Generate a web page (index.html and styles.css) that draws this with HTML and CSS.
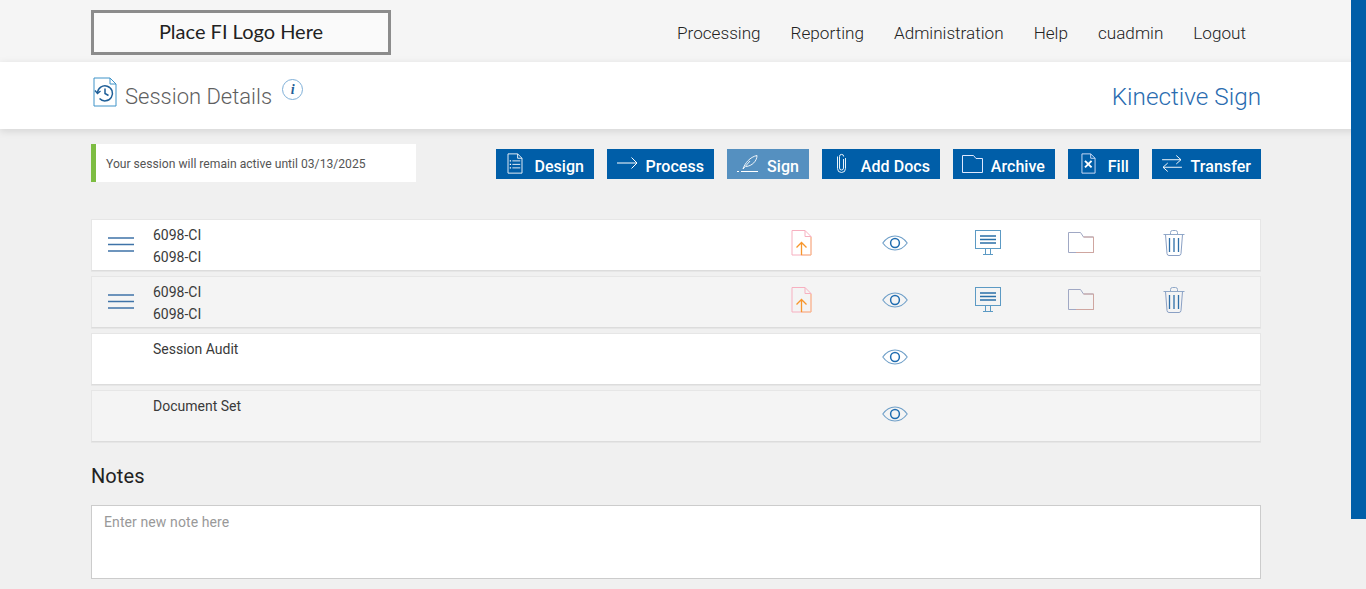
FILE: index.html
```html
<!DOCTYPE html>
<html lang="en">
<head>
<meta charset="utf-8">
<title>Session Details</title>
<link rel="stylesheet" href="styles.css">
</head>
<body>
<svg class="defs" width="0" height="0" aria-hidden="true">
  <defs>
    <symbol id="i-upload" viewBox="0 0 21 26">
      <path d="M1 .5h13l6 6v18.500H1z M14 .5v6h6" fill="none" stroke="#f7b0c0"/>
      <path d="M20 7v18H10" fill="none" stroke="#f9bc84"/>
      <path d="M10.500 25V12.500M5.500 17.500l5-5 5 5" fill="none" stroke="#f7962c" stroke-width="1.300"/>
    </symbol>
    <symbol id="i-eye" viewBox="0 0 26 16">
      <path d="M.8 8C4 3.500 8.500 1 13 1s9 2.500 12.200 7C22 12.500 17.500 15 13 15S4 12.500.8 8z" fill="none" stroke="#6f9fc8" stroke-width="1.100"/>
      <circle cx="13" cy="8" r="4.400" fill="none" stroke="#1f6cb0" stroke-width="1.500"/>
    </symbol>
    <symbol id="i-screen" viewBox="0 0 26 25">
      <rect x=".5" y=".5" width="25" height="18" fill="none" stroke="#5c9ac4"/>
      <path d="M5 6h16M5 9.500h16M5 13h16" stroke="#2a6fa8" stroke-width="1.300"/>
      <path d="M10.500 19v5M15.500 19v5M8 24.500h10" stroke="#5c9ac4" fill="none"/>
    </symbol>
    <symbol id="i-folder" viewBox="0 0 26 21">
      <path d="M.5 20.500V.5h12l3 4.500h10v15.500z" fill="none" stroke="#a0a8c4"/>
      <path d="M15.500 5h10v15.500H8" fill="none" stroke="#cfa6a0"/>
    </symbol>
    <symbol id="i-trash" viewBox="0 0 22 26">
      <path d="M.5 4.500h21M7.500 4.500V2.500q0-2 2-2h3q2 0 2 2v2" fill="none" stroke="#90a8c8"/>
      <path d="M2.500 4.500l1.500 19q.2 2 2 2h10q1.800 0 2-2l1.500-19" fill="none" stroke="#8aa0c4"/>
      <path d="M6.500 8v14M11 8v14M15.500 8v14" stroke="#2f6fa8" stroke-width="1.300"/>
    </symbol>
    <symbol id="i-menu" viewBox="0 0 26 16">
      <path d="M0 1h26M0 7.500h26M0 14h26" stroke="#3f73a8" stroke-width="1.400"/>
    </symbol>
  </defs>
</svg>

<header class="topbar">
  <div class="wrap topbar-inner">
    <div class="logo">Place FI Logo Here</div>
    <nav class="nav">
      <a>Processing</a><a>Reporting</a><a>Administration</a><a>Help</a><a>cuadmin</a><a>Logout</a>
    </nav>
  </div>
</header>

<section class="subhead">
  <div class="wrap subhead-inner">
    <div class="title-group">
      <svg class="title-icon" width="24" height="30" viewBox="0 0 24 30" aria-hidden="true">
        <path d="M1 1h16l6 6v22H1z M17 1v6h6" fill="none" stroke="#3f93c8" stroke-width="1"/>
        <path d="M4.500 16a7.500 7.500 0 1 1 2 5.500" fill="none" stroke="#1f5f98" stroke-width="1.500"/>
        <path d="M2 13.500l2.500 3 3-2.500" fill="none" stroke="#1f5f98" stroke-width="1.400"/>
        <path d="M12 11.500v5l3.500 2" fill="none" stroke="#1f5f98" stroke-width="1.500"/>
      </svg>
      <h1 class="title">Session Details</h1>
      <span class="info">i</span>
    </div>
    <div class="product">Kinective Sign</div>
  </div>
</section>

<main class="wrap">
  <div class="actions">
    <div class="session-note">Your session will remain active until 03/13/2025</div>
    <div class="buttons">
      <a class="btn btn-design">
        <svg width="16" height="21" viewBox="0 0 18 24" aria-hidden="true"><path d="M1 1h11l5 5v17H1z M12 1v5h5" fill="none" stroke="#fff"/><path d="M6 9h9M6 13h9M6 17h9" stroke="#fff"/><path d="M3 9h1.500M3 13h1.500M3 17h1.500" stroke="#fff" stroke-width="1.600"/></svg>
        Design</a>
      <a class="btn btn-process">
        <svg width="21" height="12" viewBox="0 0 21 12" aria-hidden="true"><path d="M0 6h20M14.500 .5L20 6l-5.500 5.500" fill="none" stroke="#fff"/></svg>
        Process</a>
      <a class="btn btn-sign btn-active">
        <svg width="21" height="17" viewBox="0 0 21 17" aria-hidden="true"><path d="M0 16.500h21" stroke="#fff" stroke-dasharray="2 2 17"/><path d="M6 14C8 8 13 2 20 .5 20 6 15 11 9 11.500M6 14l7-8" fill="none" stroke="#fff" stroke-width=".9"/></svg>
        Sign</a>
      <a class="btn btn-docs">
        <svg width="9" height="20" viewBox="0 0 9 20" aria-hidden="true"><path d="M6.500 6v9a2 2 0 0 1-4 0V3.500a2 2 0 0 1 4.200 0M8.500 5v10.500a4 4 0 0 1-8 0V3.500" fill="none" stroke="#e8f4fb"/></svg>
        Add Docs</a>
      <a class="btn btn-archive">
        <svg width="21" height="18" viewBox="0 0 21 18" aria-hidden="true"><path d="M.5 17.500V.5h11l2.500 3h6.500v14z" fill="none" stroke="#dfe8ff"/></svg>
        Archive</a>
      <a class="btn btn-fill">
        <svg width="17" height="21" viewBox="0 0 17 24" aria-hidden="true"><path d="M1 1h10l5 5v17H1z M11 1v5h5" fill="none" stroke="#dfe8ff"/><path d="M4.500 9l7.500 7.500M12 9l-7.500 7.500" stroke="#fff" stroke-width="2.200"/></svg>
        Fill</a>
      <a class="btn btn-transfer">
        <svg width="20" height="17" viewBox="0 0 21 18" aria-hidden="true"><path d="M0 5h20M15 .5L20 5l-5 4.500M21 13H1M6 8.500L1 13l5 4.500" fill="none" stroke="#fff"/></svg>
        Transfer</a>
    </div>
  </div>

  <div class="rows">
    <div class="row">
      <svg class="menu" width="26" height="16"><use href="#i-menu"/></svg>
      <div class="row-text"><div>6098-CI</div><div>6098-CI</div></div>
      <svg width="21" height="26"><use href="#i-upload"/></svg>
      <svg class="eye" width="26" height="16"><use href="#i-eye"/></svg>
      <svg width="26" height="25"><use href="#i-screen"/></svg>
      <svg class="folder" width="26" height="21"><use href="#i-folder"/></svg>
      <svg width="22" height="26"><use href="#i-trash"/></svg>
    </div>
    <div class="row row-alt">
      <svg class="menu" width="26" height="16"><use href="#i-menu"/></svg>
      <div class="row-text"><div>6098-CI</div><div>6098-CI</div></div>
      <svg width="21" height="26"><use href="#i-upload"/></svg>
      <svg class="eye" width="26" height="16"><use href="#i-eye"/></svg>
      <svg width="26" height="25"><use href="#i-screen"/></svg>
      <svg class="folder" width="26" height="21"><use href="#i-folder"/></svg>
      <svg width="22" height="26"><use href="#i-trash"/></svg>
    </div>
    <div class="row">
      <span></span>
      <div class="row-text"><div>Session Audit</div></div>
      <span></span>
      <svg class="eye" width="26" height="16"><use href="#i-eye"/></svg>
    </div>
    <div class="row row-alt">
      <span></span>
      <div class="row-text"><div>Document Set</div></div>
      <span></span>
      <svg class="eye" width="26" height="16"><use href="#i-eye"/></svg>
    </div>
  </div>

  <h2 class="notes-title">Notes</h2>
  <textarea class="notes" placeholder="Enter new note here"></textarea>
</main>

<div class="scrollbar"></div>
</body>
</html>
```

FILE: styles.css
```css
* { box-sizing: border-box; }
html, body { height: 100%; }
body {
  margin: 0;
  height: 589px;
  overflow: hidden;
  background: #f0f0f0;
  font-family: Roboto, "Liberation Sans", sans-serif;
  color: #333;
}
.defs { position: absolute; }
.wrap { width: 1170px; margin-left: 91px; }

.topbar { height: 62px; background: #f5f5f5; }
.topbar-inner { display: flex; justify-content: space-between; padding-top: 10px; }
.logo {
  width: 300px;
  height: 45px;
  border: 3px solid #8c8c8c;
  background: #fafafa;
  display: flex;
  align-items: center;
  justify-content: center;
  font-family: Lato, sans-serif;
  font-size: 20px;
  color: #222;
  padding-bottom: 4px;
}
.nav { display: flex; gap: 30px; padding: 13px 15px 0 0; font-size: 17.14px; font-weight: 300; line-height: 20px; color: #222; }

.subhead { height: 67px; background: #fff; box-shadow: 0 2px 8px rgba(0,0,0,.12); position: relative; }
.subhead-inner { display: flex; justify-content: space-between; }
.title-group { display: flex; align-items: flex-start; padding: 15px 0 0 2px; }
.title-icon { display: block; }
.title { margin: 6px 0 0 8px; font-size: 22px; line-height: 28px; font-weight: 300; color: #5f5f5f; }
.info {
  width: 21px; height: 21px;
  margin: 2px 0 0 10px;
  border: 1px solid #7fb0d8;
  border-radius: 50%;
  display: flex; align-items: center; justify-content: center;
  font: italic 700 14px "Liberation Serif", serif;
  color: #1f5f98;
}
.product { padding-top: 20px; font-size: 24.3px; line-height: 30px; font-weight: 300; color: #2a6cb0; }

.actions { display: flex; justify-content: space-between; align-items: flex-start; padding-top: 15px; }
.session-note {
  width: 325px; height: 38px;
  background: #fff;
  border-left: 5px solid #7dbd42;
  padding: 1px 0 0 10px;
  font-size: 12.14px;
  line-height: 38px;
  color: #555;
}
.buttons { display: flex; gap: 13px; padding-top: 5px; }
.btn {
  height: 30px;
  background: #005ea8;
  color: #fff;
  font-size: 16px;
  font-weight: 500;
  letter-spacing: .05px;
  display: flex;
  align-items: center;
  justify-content: flex-end;
  padding: 4px 10px 0 0;
  position: relative;
}
.btn svg { position: absolute; left: 11px; top: 4px; }
.btn-design { width: 98px; }
.btn-process { width: 107px; }
.btn-sign { width: 82px; }
.btn-docs { width: 118px; }
.btn-archive { width: 102px; }
.btn-fill { width: 71px; }
.btn-transfer { width: 109px; }
.btn-active { background: #5590c0; }
.btn-process svg { left: 10px; top: 8px; }
.btn-sign svg { left: 10px; top: 6px; }
.btn-docs svg { left: 15px; top: 4px; }
.btn-archive svg { left: 9px; top: 6px; }
.btn-fill svg { left: 12px; top: 4px; }
.btn-transfer svg { left: 10px; top: 6px; }

.rows { display: flex; flex-direction: column; gap: 5px; margin-top: 37px; }
.row {
  height: 52px;
  background: #fff;
  border: 1px solid #e6e6e6;
  border-bottom-color: #dcdcdc;
  box-shadow: 0 1px 0 #e6e6e6;
  display: grid;
  grid-template-columns: 61px 638px 91px 93px 93px 95px 1fr;
  align-items: start;
}
.row svg { margin-top: 10px; }
.row svg.eye { margin-top: 15px; }
.row svg.folder { margin-top: 12px; }
.row svg.menu { margin: 17px 0 0 16px; }
.row-alt { background: #f4f4f4; }
.row-text { padding-top: 4px; font-size: 14px; line-height: 22px; color: #3a3a3a; }

.notes-title { margin: 22px 0 0; font-size: 20px; line-height: 24px; font-weight: 400; letter-spacing: .1px; color: #222; }
.notes {
  display: block;
  width: 1170px;
  height: 74px;
  margin-top: 17px;
  border: 1px solid #ccc;
  background: #fff;
  padding: 8px 12px;
  font: 14px/16px Roboto, sans-serif;
  letter-spacing: .1px;
  resize: none;
  outline: none;
}
.notes::placeholder { color: #999; opacity: 1; }

.scrollbar { position: absolute; top: 0; right: 0; width: 15px; height: 519px; background: #005ea8; }
```
